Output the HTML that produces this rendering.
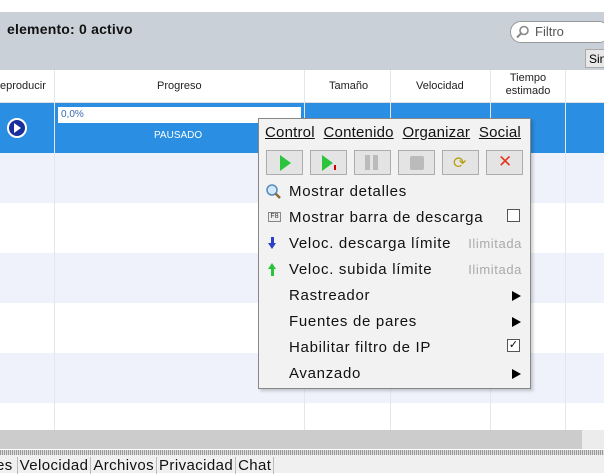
<!DOCTYPE html>
<html><head><meta charset="utf-8"><style>
*{margin:0;padding:0;box-sizing:border-box}
body{width:604px;height:473px;overflow:hidden;background:#fff;font-family:"Liberation Sans","DejaVu Sans",sans-serif;position:relative}
.a{position:absolute}
.vl{position:absolute;width:1px;background:#e3e6ec}
.mi{position:absolute;left:30px;font-size:15px;letter-spacing:0.7px;color:#111;white-space:nowrap}
.arr{position:absolute;right:9px;width:0;height:0;border-left:9px solid #000;border-top:5px solid transparent;border-bottom:5px solid transparent}
.lim{position:absolute;right:8px;font-size:13px;letter-spacing:0.6px;color:#aaa}
.btn{position:absolute;top:31px;width:37px;height:25px;border:1px solid #adadad;background:#e4e4e4}
.tb u{text-decoration:underline}
</style></head><body>
<div class="a" style="left:0;top:12px;width:604px;height:58px;background:#c9d0d8"></div>
<div class="a" style="left:7px;top:21px;font-size:14px;font-weight:bold;color:#111;letter-spacing:0.2px">elemento: 0 activo</div>
<div class="a" style="left:510px;top:21px;width:100px;height:22px;border:1px solid #999;border-radius:11px;background:#fff"></div>
<svg class="a" style="left:516px;top:25px" width="14" height="14"><circle cx="8" cy="5.5" r="4" fill="none" stroke="#888" stroke-width="1.6"/><line x1="5" y1="8.5" x2="1" y2="12.5" stroke="#888" stroke-width="2"/></svg>
<div class="a" style="left:535px;top:24px;font-size:13px;color:#555">Filtro</div>
<div class="a" style="left:585px;top:49px;width:30px;height:19px;border:1px solid #aaa;background:#e8e8e8;font-size:12px;padding:2px 0 0 3px">Sin</div>
<div class="a" style="left:0;top:70px;width:604px;height:33px;background:#fff;border-bottom:1px solid #e0e0e0"></div>
<div class="a" style="left:0;top:80px;font-size:11px;color:#222">eproducir</div>
<div class="a" style="left:157px;top:80px;font-size:11px;color:#222">Progreso</div>
<div class="a" style="left:329px;top:80px;font-size:11px;color:#222">Tamaño</div>
<div class="a" style="left:416px;top:80px;font-size:11px;color:#222">Velocidad</div>
<div class="a" style="left:498px;top:72px;font-size:11px;color:#222;text-align:center;line-height:13px;width:60px">Tiempo<br>estimado</div>
<div class="a" style="left:0;top:103px;width:604px;height:50px;background:#2a8ee2"></div>
<div class="a" style="left:0;top:153px;width:604px;height:50px;background:#eff2fa"></div>
<div class="a" style="left:0;top:253px;width:604px;height:50px;background:#eff2fa"></div>
<div class="a" style="left:0;top:353px;width:604px;height:50px;background:#eff2fa"></div>
<div class="vl" style="left:54px;top:70px;height:360px"></div>
<div class="vl" style="left:304px;top:70px;height:360px"></div>
<div class="vl" style="left:390px;top:70px;height:360px"></div>
<div class="vl" style="left:490px;top:70px;height:360px"></div>
<div class="vl" style="left:565px;top:70px;height:360px"></div>
<div class="a" style="left:7px;top:118px;width:20px;height:20px;border-radius:50%;background:#1a2f9a;border:2px solid #fff"></div>
<div class="a" style="left:14px;top:123px;width:0;height:0;border-left:7px solid #fff;border-top:5px solid transparent;border-bottom:5px solid transparent"></div>
<div class="a" style="left:58px;top:107px;width:243px;height:16px;background:#fff;font-size:10px;color:#3a6ab0;padding:2px 0 0 3px">0,0%</div>
<div class="a" style="left:154px;top:130px;font-size:10px;color:#fff">PAUSADO</div>
<div class="a" style="left:0;top:430px;width:582px;height:19px;background:#cccccc"></div>
<div class="a" style="left:582px;top:430px;width:22px;height:19px;background:#ececec"></div>
<div class="a" style="left:0;top:450px;width:604px;height:5px;background:repeating-linear-gradient(90deg,#999 0 1px,#ddd 1px 2px)"></div>
<div class="a" style="left:0;top:455px;width:604px;height:18px;background:#f0f0f0"></div>
<div class="a" style="left:-4px;top:457px;font-size:15px;letter-spacing:0.4px;color:#111;white-space:nowrap">es<span style="border-left:1px solid #bbb;margin-left:4px;padding:0 2px">Velocidad</span><span style="border-left:1px solid #bbb;padding:0 2px">Archivos</span><span style="border-left:1px solid #bbb;padding:0 2px">Privacidad</span><span style="border-left:1px solid #bbb;border-right:1px solid #bbb;padding:0 2px">Chat</span></div>
<div class="a" style="left:258px;top:118px;width:273px;height:271px;background:#f2f2f2;border:1px solid #888;box-shadow:2px 2px 3px rgba(0,0,0,.2)">
 <div class="a tb" style="left:6px;top:5px;font-size:15px;letter-spacing:0.2px;color:#111;white-space:nowrap"><u>Control</u>&nbsp;&nbsp;<u>Contenido</u>&nbsp;&nbsp;<u>Organizar</u>&nbsp;&nbsp;<u>Social</u></div>
 <div class="btn" style="left:7px"></div><div class="a" style="left:21px;top:36px;border-left:11px solid #2bc43c;border-top:8px solid transparent;border-bottom:8px solid transparent"></div>
 <div class="btn" style="left:51px"></div><div class="a" style="left:63px;top:36px;border-left:11px solid #2bc43c;border-top:8px solid transparent;border-bottom:8px solid transparent"></div><div class="a" style="left:75px;top:46px;width:2px;height:5px;background:#c00"></div>
 <div class="btn" style="left:95px"></div><div class="a" style="left:106px;top:36px;width:5px;height:15px;background:#bbb"></div><div class="a" style="left:114px;top:36px;width:5px;height:15px;background:#bbb"></div>
 <div class="btn" style="left:139px"></div><div class="a" style="left:151px;top:37px;width:14px;height:14px;background:#bbb;border-radius:2px"></div>
 <div class="btn" style="left:183px"></div><div class="a" style="left:194px;top:34px;font-size:16px;color:#b8a010">⟳</div>
 <div class="btn" style="left:227px"></div><div class="a" style="left:239px;top:33px;font-size:17px;font-weight:bold;color:#e03a20">✕</div>
 <svg class="a" style="left:6px;top:64px" width="18" height="18"><circle cx="7" cy="7" r="5" fill="#cfe8ff" stroke="#5a8ab8" stroke-width="1.5"/><line x1="10.5" y1="10.5" x2="15" y2="15" stroke="#8a6a3a" stroke-width="2.5"/></svg>
 <div class="mi" style="top:64px">Mostrar detalles</div>
 <div class="a" style="left:9px;top:93px;width:13px;height:10px;border:1px solid #888;background:#eee;font-size:7px;line-height:8px;text-align:center;color:#333">F8</div>
 <div class="mi" style="top:90px">Mostrar barra de descarga</div>
 <div class="a" style="left:248px;top:90px;width:13px;height:13px;border:1px solid #555;background:#fff"></div>
 <div class="a" style="left:12px;top:118px;width:3px;height:7px;background:#2a40c8"></div><div class="a" style="left:9px;top:124px;border-top:6px solid #2a40c8;border-left:4.5px solid transparent;border-right:4.5px solid transparent"></div>
 <div class="mi" style="top:116px">Veloc. descarga límite</div><div class="lim" style="top:117px">Ilimitada</div>
 <div class="a" style="left:9px;top:144px;border-bottom:6px solid #2ac43a;border-left:4.5px solid transparent;border-right:4.5px solid transparent"></div><div class="a" style="left:12px;top:150px;width:3px;height:7px;background:#2ac43a"></div>
 <div class="mi" style="top:142px">Veloc. subida límite</div><div class="lim" style="top:143px">Ilimitada</div>
 <div class="mi" style="top:168px">Rastreador</div><div class="arr" style="top:172px"></div>
 <div class="mi" style="top:194px">Fuentes de pares</div><div class="arr" style="top:198px"></div>
 <div class="mi" style="top:220px">Habilitar filtro de IP</div>
 <div class="a" style="left:248px;top:220px;width:13px;height:13px;border:1px solid #555;background:#fff;font-size:11px;line-height:11px;text-align:center;font-weight:bold">✓</div>
 <div class="mi" style="top:246px">Avanzado</div><div class="arr" style="top:250px"></div>
</div>
</body></html>
